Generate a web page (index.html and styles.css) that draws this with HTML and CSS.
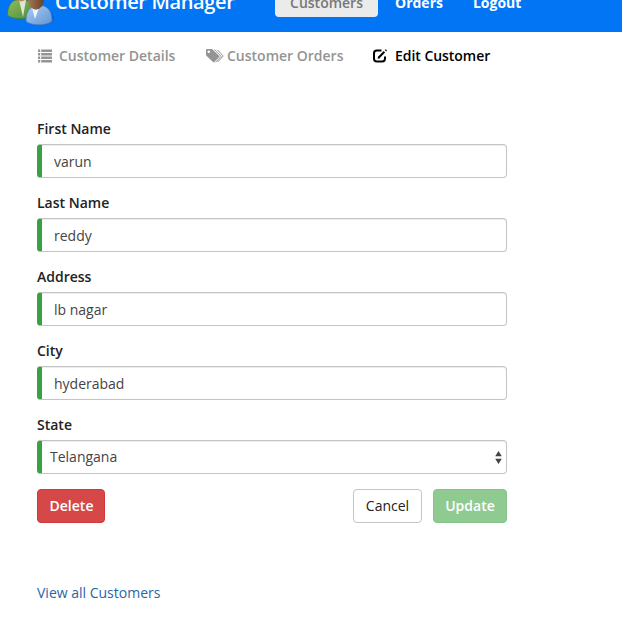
FILE: index.html
```
<!DOCTYPE html>
<html lang="en">
<head>
<meta charset="utf-8">
<title>Customer Manager</title>
<link rel="stylesheet" href="styles.css">
</head>
<body>
<header class="navbar">
  <div class="navbar-inner">
    <svg class="logo" width="48" height="52" viewBox="0 0 48 52">
      <defs>
        <linearGradient id="green" x1="0" y1="0" x2="1" y2="1"><stop offset="0" stop-color="#8fbd63"/><stop offset="1" stop-color="#4d8c35"/></linearGradient>
        <linearGradient id="blue" x1="0" y1="0" x2="1" y2="1"><stop offset="0" stop-color="#a9cdf5"/><stop offset="1" stop-color="#6394d2"/></linearGradient>
        <linearGradient id="skin" x1="0" y1="0" x2="1" y2="0"><stop offset="0" stop-color="#a77751"/><stop offset="1" stop-color="#65412d"/></linearGradient>
      </defs>
      <ellipse cx="36" cy="43" rx="12" ry="7" fill="#0756b5" opacity=".6"/>
      <path d="M1.500 40C1.500 32 5 26 10 25h10c5 2 7 7 7 15-4 5-21 5-25.500 0z" fill="url(#green)" stroke="#39782f" stroke-width=".6"/>
      <path d="M13 25h7l-3 17z" fill="#dce8d4"/>
      <ellipse cx="15" cy="18.500" rx="7" ry="8" fill="#c58b5e"/>
      <path d="M20 46c0-8 3-13 8-15h10c5 2 8 7 8 15-4 5-22 5-26 0z" fill="url(#blue)" stroke="#4c7bb6" stroke-width=".6"/>
      <path d="M26 33l4 2 3-2-4 11z" fill="#edf3fb"/>
      <ellipse cx="30" cy="24" rx="8" ry="10.500" fill="url(#skin)"/>
    </svg>
    <span class="brand">Customer Manager</span>
    <nav class="main-nav">
      <a class="nav-link active">Customers</a>
      <a class="nav-link">Orders</a>
      <a class="nav-link">Logout</a>
    </nav>
  </div>
</header>
<nav class="toolbar">
  <a class="tool details">
    <svg width="14" height="14" viewBox="0 0 14 14" fill="currentColor"><path d="M0 .5h2.200v2.600H0zM3.200.5H14v2.600H3.200zM0 4h2.200v2.600H0zM3.200 4H14v2.600H3.200zM0 7.500h2.200v2.600H0zM3.200 7.500H14v2.600H3.200zM0 11h2.200v2.600H0zM3.200 11H14v2.600H3.200z"/></svg>
    <span>Customer Details</span>
  </a>
  <a class="tool orders">
    <svg width="18" height="15" viewBox="0 0 18 15" fill="currentColor"><path fill-rule="evenodd" d="M0 1Q0 0 1 0h4.600q.6 0 1 .4l6.600 6.500q.6.6 0 1.200l-4.900 5q-.7.600-1.300 0L.4 6.700Q0 6.300 0 5.700zM2.800 1.400a1.300 1.300 0 1 0 0 2.600 1.300 1.300 0 0 0 0-2.600z"/><path d="M8.300.4l6.800 7-5.600 6M11.300.800L17.200 7l-5.500 6" fill="none" stroke="currentColor" stroke-width="1"/></svg>
    <span>Customer Orders</span>
  </a>
  <a class="tool edit">
    <svg width="15" height="14" viewBox="0 0 15 14" fill="none" stroke="currentColor"><path d="M8.500 1.600H3.800Q1 1.600 1 4.200v5.600q0 2.600 2.800 2.600h5.400q2.800 0 2.800-2.600V7.500" stroke-width="2"/><path d="M6 8.300l5.400-5.600" stroke-width="2"/><path d="M12.500 1.700l.8-.8" stroke-width="2"/><path d="M5.100 7L4.600 9.800l2.800-.5z" fill="currentColor" stroke="none"/></svg>
    <span>Edit Customer</span>
  </a>
</nav>
<main class="content">
  <form class="form">
    <label class="group"><span>First Name</span><input class="control" type="text" value="varun"></label>
    <label class="group"><span>Last Name</span><input class="control" type="text" value="reddy"></label>
    <label class="group"><span>Address</span><input class="control" type="text" value="lb nagar"></label>
    <label class="group"><span>City</span><input class="control" type="text" value="hyderabad"></label>
    <div class="group"><span>State</span>
      <div class="control select" tabindex="0"><span>Telangana</span>
        <svg width="7" height="13" viewBox="0 0 7 13" fill="#444"><path d="M3.500 0L6.800 5.300H.2zM.2 7.700h6.600L3.500 13z"/></svg>
      </div>
    </div>
    <div class="actions">
      <button type="button" class="btn danger">Delete</button>
      <div class="right">
        <button type="button" class="btn cancel">Cancel</button>
        <button type="button" class="btn success">Update</button>
      </div>
    </div>
  </form>
  <a class="all-link">View all Customers</a>
</main>
</body>
</html>
```
FILE: styles.css
```
* { box-sizing: border-box; }
body {
  margin: 0;
  height: 623px;
  overflow: hidden;
  background: #fff;
  color: #222;
  font: 14px/20px "Open Sans", sans-serif;
}
.navbar {
  height: 32px;
  overflow: hidden;
  background: #0275f5;
  color: #fff;
}
.navbar-inner {
  display: flex;
  align-items: center;
  height: 60px;
  margin-top: -28px;
  padding-left: 6px;
}
.logo { flex: none; margin-top: -2px; }
.brand {
  width: 221px;
  margin: 0 0 0 1px;
  font-size: 20px;
  font-weight: 600;
  letter-spacing: -.36px;
  line-height: 28px;
  white-space: nowrap;
}
.main-nav { display: flex; margin: -4px 0 0 -1px; }
.nav-link {
  height: 34px;
  padding: 10px 15px 4px;
  border-radius: 4px;
  font-weight: 700;
  line-height: 20px;
}
.nav-link.active {
  width: 103px;
  margin-right: 2px;
  padding: 10px 0 4px;
  text-align: center;
  background: #ebebeb;
  color: #777;
  font-weight: 600;
}
.toolbar {
  display: flex;
  height: 48px;
  padding-left: 38px;
  color: #949494;
  font-weight: 600;
}
.tool { display: flex; align-items: center; white-space: nowrap; }
.tool svg { flex: none; }
.details { width: 168px; gap: 7px; }
.orders { width: 167px; gap: 3px; }
.edit { gap: 7px; color: #000; letter-spacing: -.04px; }
.content { padding: 39px 37px 0; }
.form { width: 470px; }
.group { display: block; height: 74px; }
.group > span { display: block; height: 25px; font-weight: 600; }
.control {
  display: block;
  width: 100%;
  height: 34px;
  padding: 6px 12px;
  border: 1px solid #c4c4c4;
  border-left: 5px solid #39a043;
  border-radius: 4px;
  outline: 0;
  background: #fff;
  box-shadow: inset 0 1px 1px rgba(0, 0, 0, .075);
  color: #444;
  font: inherit;
}
.select {
  display: flex;
  align-items: center;
  justify-content: space-between;
  padding: 6px 4px 6px 8px;
}
.actions { display: flex; justify-content: space-between; }
.right { display: flex; gap: 11px; }
.btn {
  height: 34px;
  padding: 0;
  border: 1px solid #c4c4c4;
  border-radius: 4px;
  background: #fff;
  font: inherit;
  line-height: 20px;
}
.danger {
  width: 68px;
  padding-left: 1px;
  border-color: #cf3a3a;
  background: #d64848;
  color: #fff;
  font-weight: 600;
}
.cancel { width: 69px; color: #222; }
.success {
  width: 74px;
  border-color: #84c489;
  background: #8fcb91;
  color: #fff;
  font-weight: 600;
}
.all-link { display: inline-block; margin-top: 60px; color: #2864ab; }
```
